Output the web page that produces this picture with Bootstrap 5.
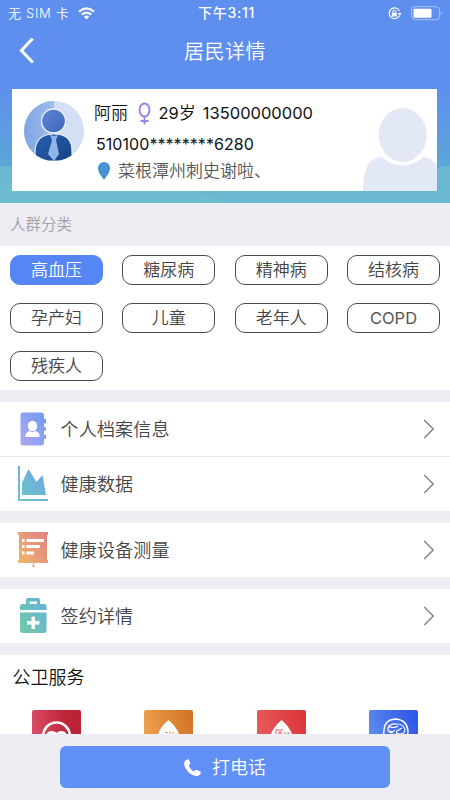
<!DOCTYPE html>
<html lang="zh-CN">
<head>
<meta charset="utf-8">
<meta name="viewport" content="width=device-width, initial-scale=1">
<title>居民详情</title>
<link rel="stylesheet" href="https://cdn.jsdelivr.net/npm/bootstrap@5.3.0/dist/css/bootstrap.min.css">
<style>
body{font-family:Inter,"Noto Sans CJK SC",sans-serif;font-weight:350;background:#eeedf3;color:#444;height:800px;overflow:hidden;line-height:1}
svg{display:block;flex:none}
.hero{height:203px;background:linear-gradient(180deg,#5e8fee 0,#5e8fee 42%,#5c9de0 68%,#5ba8d4 86%,#60b3d0 100%)}
.hero-wave{left:0;top:160px}
.status{height:26px;font-size:13px;padding:0 8px}
.status .carrier{width:190px;letter-spacing:.7px}
.status .clock{font-weight:500;font-size:14px;letter-spacing:.75px}
.titlebar{height:50px}
.titlebar .page-title{font-size:20px;letter-spacing:.5px;padding-top:2px}
.back{left:19px;top:11px}
.profile{margin:13px 13px 0 12px;height:102px;padding-left:12px}
.avatar{margin-top:12px}
.who{font-size:17px;color:#111}
.latin{font-weight:400}
.who .latin{font-size:16.5px}
.who .num{margin-left:7px}
.who .sex{margin:0 8px 0 9.500px}
.who,.idno,.addr{white-space:nowrap}
.info{padding:13px 0 0 10px}
.idno{font-size:16px;letter-spacing:.06px;color:#111;margin:10px 0 0 2px;height:18px;line-height:18px}
.addr{font-size:17px;color:#555;margin-top:9px;height:18px;line-height:18px;padding-left:4px}
.ghost{right:0;bottom:0}
.sec-label{height:43px;font-size:15.5px;color:#a3a3a8;padding-left:10px}
.tags{height:144px;padding:9px 10px;display:grid;grid-template-columns:repeat(4,93px);justify-content:space-between;grid-auto-rows:30px;row-gap:18px}
.tag{border:1px solid #4a4a4a;border-radius:10px;font-size:17px;color:#444;background:#fff;padding:1px 0 0;line-height:1;font-weight:350}
.tag.latin{font-size:16.500px;font-weight:400;color:#555}
.tag.on{background:#5686f6;border-color:#5686f6;color:#fff}
.menu-group{margin-top:12px}
.menu-item{height:54px;padding:0 15px 0 18px;font-size:18px;letter-spacing:.2px;background:#fff;color:#444}
.menu-item .ico{width:30px;margin-right:12.500px}
.menu-item .raised{margin-bottom:2px}
.menu-item.split .raised{margin-bottom:1px}
.menu-item .label{padding-top:2px}
.split{border-top:1px solid #e4e4e9!important;height:55px}
.services{height:79px;overflow:hidden;margin-top:12px}
.services .head{font-size:18px;color:#111;padding:14px 0 0 12.500px;height:54.500px;line-height:18px}
.callbar{height:66px;padding-top:12px}
.call{width:330px;height:42px;background:#608ff6;border-radius:6px;font-size:18px;color:#fff;border:0;font-weight:350}
.call .handset{margin-right:11px}
.call .label{padding-top:2px}
</style>
<script src="https://cdn.jsdelivr.net/npm/bootstrap@5.3.0/dist/js/bootstrap.bundle.min.js"></script>
</head>
<body>
<header class="hero position-relative overflow-hidden">
  <svg class="hero-wave position-absolute" width="450" height="43" viewBox="0 0 450 43"><path d="M0 6Q80 6 180 30Q320 34 450 5V43H0Z" fill="#69b8cf"/><path d="M0 26Q50 8 110 12Q175 22 230 43H0Z" fill="#6fbccd" opacity=".6"/></svg>
  <div class="status d-flex align-items-center text-white position-relative">
    <div class="carrier d-flex align-items-center"><span>无 SIM 卡</span>
      <svg class="ms-2" width="17" height="13" viewBox="0 0 17 13" fill="none" stroke="#fff" stroke-width="2.2"><path d="M1 4.600Q8.500-2 16 4.600M3.800 7.600Q8.500 3.600 13.200 7.600"/><path d="M5.900 9.600Q8.500 7.500 11.100 9.600L8.500 12.400Z" fill="#fff" stroke="none"/></svg>
    </div>
    <span class="clock">下午3:11</span>
    <div class="ms-auto d-flex align-items-center gap-2">
      <svg width="14" height="13" viewBox="0 0 14 13"><path d="M11.400 8.700A5.400 5.400 0 1 1 11.500 4" fill="none" stroke="#fff" stroke-width="1.200"/><path d="M9.800 6h4l-2 2.800Z" fill="#fff"/><path d="M3.800 5.800h5v3.700h-5Z" fill="#fff"/><path d="M4.800 6V4.700a1.500 1.500 0 0 1 3 0V6" fill="none" stroke="#fff"/></svg>
      <svg width="32" height="15" viewBox="0 0 32 15"><rect x="1.500" y=".7" width="28" height="13" rx="3.500" fill="none" stroke="#fff" opacity=".45"/><rect x="3.500" y="2.700" width="18" height="9" rx="1" fill="#fff"/><path d="M30.700 5q1.700 2.200 0 4.500Z" fill="#fff" opacity=".5"/></svg>
    </div>
  </div>
  <div class="titlebar d-flex align-items-center justify-content-center text-white position-relative">
    <svg class="back position-absolute" width="16" height="27" viewBox="0 0 16 28" fill="none" stroke="#fff" stroke-width="3.200"><path d="M14 1.500 2.200 14 14 26.500"/></svg>
    <span class="page-title">居民详情</span>
  </div>
  <section class="profile bg-white d-flex position-relative">
    <svg class="avatar" width="60" height="60" viewBox="0 0 60 60">
      <defs><clipPath id="av"><circle cx="30" cy="30" r="30"/></clipPath><linearGradient id="avl" x2="1"><stop stop-color="#7fa5e2"/><stop offset="1" stop-color="#a0bdec"/></linearGradient><linearGradient id="avb" x2="1" y2="1"><stop stop-color="#2a62b4"/><stop offset="1" stop-color="#164183"/></linearGradient><linearGradient id="avh" x2="1" y2="1"><stop stop-color="#5c86d8"/><stop offset="1" stop-color="#3f66b6"/></linearGradient></defs>
      <g clip-path="url(#av)"><path fill="#d3dff4" d="M0 0h60v60H0z"/><path fill="url(#avl)" d="M0 0h30v60H0z"/><path d="M11 60V50Q12 33 30 33T48 50V60Z" fill="url(#avb)" stroke="#f1f1ef" stroke-width="1.200"/><path d="m26 34 4 1 4-1-2 5 3 14-5 7-6-7 4-14Z" fill="#8eb4e9"/><circle cx="29.500" cy="20" r="12" fill="url(#avh)" stroke="#f1f1ef" stroke-width="1.300"/></g>
    </svg>
    <div class="info">
      <div class="who d-flex align-items-center">
        <span>阿丽</span>
        <svg class="sex" width="13" height="23" viewBox="0 0 13 23" fill="none" stroke="#9b80e8" stroke-width="1.900"><ellipse cx="6.500" cy="8" rx="5" ry="6.500"/><path d="M6.500 14.500v8M2.500 19h8"/></svg>
        <span class="latin">29</span><span>岁</span><span class="num latin">13500000000</span>
      </div>
      <div class="idno latin">510100********6280</div>
      <div class="addr d-flex align-items-center"><svg class="me-2" width="12" height="18" viewBox="0 0 12 18"><path d="M6 0a6 6 0 0 1 6 6.200C12 11 8 14.500 6 18 4 14.500 0 11 0 6.200A6 6 0 0 1 6 0Z" fill="#4a94d4"/></svg><span>菜根潭州刺史谢啦、</span></div>
    </div>
    <svg class="ghost position-absolute" width="74" height="84" viewBox="0 0 74 84" fill="#e2e8f6"><path d="M0 84Q0 50 19 50 27 58.500 39.500 58.500T60 50Q69 50 74 59V84Z"/><ellipse cx="39.700" cy="28" rx="24" ry="27"/></svg>
  </section>
</header>

<div class="sec-label d-flex align-items-center">人群分类</div>
<section class="tags bg-white">
  <button class="tag on">高血压</button><button class="tag">糖尿病</button><button class="tag">精神病</button><button class="tag">结核病</button>
  <button class="tag">孕产妇</button><button class="tag">儿童</button><button class="tag">老年人</button><button class="tag latin">COPD</button>
  <button class="tag">残疾人</button>
</section>

<svg width="0" height="0" class="position-absolute"><defs>
  <linearGradient id="g1" x1="1" y1="0" x2="0" y2="1"><stop stop-color="#6f98f3"/><stop offset="1" stop-color="#b0a9ee"/></linearGradient>
  <linearGradient id="g2" x1="1" y1="0" x2="0" y2="1"><stop stop-color="#6aa2e6"/><stop offset="1" stop-color="#70c4ca"/></linearGradient>
  <linearGradient id="g3" x1="1" y1="0" x2="0" y2="1"><stop stop-color="#e07f85"/><stop offset="1" stop-color="#efbc69"/></linearGradient>
  <linearGradient id="g4" x1="1" y1="0" x2="0" y2="1"><stop stop-color="#62b0dc"/><stop offset="1" stop-color="#74cba6"/></linearGradient>
  <linearGradient id="r1" x1="0" y1=".3" x2="1" y2="0"><stop stop-color="#da4d68"/><stop offset=".65" stop-color="#bd2638"/><stop offset="1" stop-color="#b62230"/></linearGradient>
  <linearGradient id="r2" x1="0" y1=".4" x2="1" y2="0"><stop stop-color="#eca24e"/><stop offset="1" stop-color="#d27022"/></linearGradient>
  <linearGradient id="r3" x1="0" y1=".3" x2="1" y2="0"><stop stop-color="#e65a59"/><stop offset="1" stop-color="#dc3337"/></linearGradient>
  <linearGradient id="r4" x1="0" y1=".4" x2="1" y2="0"><stop stop-color="#5c8bee"/><stop offset="1" stop-color="#2b52e8"/></linearGradient>
  <symbol id="chev" viewBox="0 0 12 20"><path d="m1.200 1 9 9-9 9" fill="none" stroke="#808080" stroke-width="1.400"/></symbol>
</defs></svg>

<nav class="menu-group">
  <a class="menu-item d-flex align-items-center text-decoration-none">
    <span class="ico"><svg width="30" height="34" viewBox="0 0 30 34"><path d="M5 .500H23Q26 .500 26 3V7h2v4q-2 0-2 2v1.500q0 1 2 1v3q-2 0-2 1V22q0 1 2 1v4h-2v4q0 2.500-3 2.500H5Q2.500 33.500 2.500 31V3Q2.500.500 5 .500Z" fill="url(#g1)"/><ellipse cx="14.500" cy="14" rx="4.700" ry="5.300" fill="#fff"/><path d="M7.500 25v-1.500q0-3 4-4.500 3 2 6 0 4 1.500 4 4.500V25Z" fill="#fff"/></svg></span>
    <span class="label">个人档案信息</span><svg class="ms-auto" width="12" height="20"><use href="#chev"/></svg></a>
  <a class="menu-item split d-flex align-items-center text-decoration-none">
    <span class="ico raised"><svg width="30" height="35" viewBox="0 0 30 35" fill="url(#g2)"><path d="M0 0h2v33h28v2H0Z"/><path d="M4 29V17L10.500 3l8 13 6-7 3.500 20Z"/></svg></span>
    <span class="label">健康数据</span><svg class="ms-auto" width="12" height="20"><use href="#chev"/></svg></a>
</nav>
<nav class="menu-group">
  <a class="menu-item d-flex align-items-center text-decoration-none">
    <span class="ico raised"><svg width="30" height="35" viewBox="0 0 30 35"><path d="M0 0h30v3h-1v25h1v3H16v2h.500v2h-2v-2h.500v-2H0v-3h1V3H0Z" fill="url(#g3)"/><path d="M4 7h2.500v3H4Zm4.500 0H26v3H8.500ZM4 13h2.500v3H4Zm4.500 0H22v3H8.500ZM4 19.500h2.500v3H4Zm4.500 0H16v3H8.500Z" fill="#fff"/></svg></span>
    <span class="label">健康设备测量</span><svg class="ms-auto" width="12" height="20"><use href="#chev"/></svg></a>
</nav>
<nav class="menu-group">
  <a class="menu-item d-flex align-items-center text-decoration-none">
    <span class="ico raised"><svg width="30" height="35" viewBox="0 0 30 35"><path fill-rule="evenodd" fill="url(#g4)" d="M8 6V2q0-2 2-2H20q2 0 2 2V6h4q2.500 0 2.500 2.500V12H2V8.500Q2 6 4.500 6Zm3.500 0H19V3.500H11.500ZM2 14.500H28.500V32.500q0 2.500-2.500 2.500H4.500Q2 35 2 32.500Z"/><path d="M13.500 18.500h3.500v4.500h4.500v3.500H17V31H13.500V26.500H9V23h4.500Z" fill="#fff"/></svg></span>
    <span class="label">签约详情</span><svg class="ms-auto" width="12" height="20"><use href="#chev"/></svg></a>
</nav>

<section class="services bg-white">
  <div class="head">公卫服务</div>
  <div class="row g-0 row-cols-4">
    <div class="col d-flex justify-content-center"><svg width="49" height="49" viewBox="0 0 49 49"><rect width="49" height="49" rx="2" fill="url(#r1)"/><circle cx="24.500" cy="26" r="13.500" fill="none" stroke="#fff" stroke-width="2.700"/><path d="M14 27q0-6 6-6 3 0 4.500 2 1.500-2 4.500-2 6 0 6 6l-10.500 9Z" fill="#fff"/></svg></div>
    <div class="col d-flex justify-content-center"><svg width="49" height="49" viewBox="0 0 49 49"><rect width="49" height="49" rx="2" fill="url(#r2)"/><path d="M24.500 10Q36 20 36 30a11.500 11.500 0 0 1-23 0Q13 20 24.500 10Z" fill="#fff"/><path d="M21 22.500h3m2-1v3m2-2h2m-9 2v4m5-4h4" stroke="#e59a4c" stroke-width="1" fill="none"/></svg></div>
    <div class="col d-flex justify-content-center"><svg width="49" height="49" viewBox="0 0 49 49"><rect width="49" height="49" rx="2" fill="url(#r3)"/><path d="M24.500 10Q36 20 36 30a11.500 11.500 0 0 1-23 0Q13 20 24.500 10Z" fill="#fff"/><path d="M26 20h-7v6m2-3h4m-2-2v5m5-4v4m2-3h2v3" stroke="#e06060" stroke-width="1" fill="none"/></svg></div>
    <div class="col d-flex justify-content-center"><svg width="49" height="49" viewBox="0 0 49 49" fill="none" stroke="#fff" stroke-width="1.400"><rect width="49" height="49" rx="2" fill="url(#r4)" stroke="none"/><path d="M13 28q2-3 2-8 1-11 12-11 11 1 12 12 0 5-3 9"/><path d="M24 23q-6-1-5-5 2-5 9-4 7 0 8 6 0 4-5 4-5 0-3-3l5-3m-14-2q5 3 10 0m-9 5q4 2 6-1" stroke-width="1.200"/></svg></div>
  </div>
</section>
<footer class="callbar d-flex justify-content-center align-items-start position-relative">
  <button class="call d-flex align-items-center justify-content-center"><svg class="handset" width="17" height="17" viewBox="0 0 17 17" fill="#fff"><path d="M3.500.300Q4.400 0 4.900.800L6.200 4q.300 1-.500 1.600-1 .8-.6 1.900Q6.500 10.400 9 12q1 .500 1.700-.300.800-1.200 1.800-.8l3.500 1.400q1 .500.800 1.500Q15.800 17 12.500 17 7 16.500 3 11.500 0 7.500 0 4.200.300 1.500 3.500.300Z"/></svg><span class="label">打电话</span></button>
</footer>
</body>
</html>
